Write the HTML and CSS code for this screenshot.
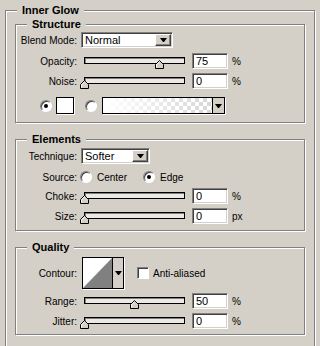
FILE: index.html
```html
<!DOCTYPE html>
<html>

<head>
    <title>Inner Glow</title>
    <link rel="stylesheet" href="styles.css">
</head>

<body>
    <div class="group outer">
        <div class="group-title outer-title">Inner Glow</div>

        <!-- Structure -->
        <div class="group inner structure">
            <div class="group-title">Structure</div>
            <div class="row row-blend">
                <span class="label">Blend Mode:</span>
                <div class="select select-blend">
                    <span class="select-text">Normal</span>
                    <span class="select-btn"><span class="arrow"></span></span>
                </div>
            </div>
            <div class="row row-opacity">
                <span class="label">Opacity:</span>
                <div class="slider">
                    <div class="track"></div>
                    <svg class="thumb" style="left: 75px" viewBox="0 0 9 9" width="9" height="9">
                        <path d="M0.5 8.5V4.5L4.5 0.5L8.5 4.5V8.5Z" fill="#d4d0c8" stroke="#000" />
                        <path d="M1.5 7.5V4.9L4.5 1.9" fill="none" stroke="#fff" />
                    </svg>
                </div>
                <div class="field">75</div>
                <span class="unit">%</span>
            </div>
            <div class="row row-noise">
                <span class="label">Noise:</span>
                <div class="slider">
                    <div class="track"></div>
                    <svg class="thumb" style="left: 0px" viewBox="0 0 9 9" width="9" height="9">
                        <path d="M0.5 8.5V4.5L4.5 0.5L8.5 4.5V8.5Z" fill="#d4d0c8" stroke="#000" />
                        <path d="M1.5 7.5V4.9L4.5 1.9" fill="none" stroke="#fff" />
                    </svg>
                </div>
                <div class="field">0</div>
                <span class="unit">%</span>
            </div>
            <div class="row row-color">
                <span class="radio checked radio-color"></span>
                <span class="swatch"></span>
                <span class="radio radio-gradient"></span>
                <div class="gradient">
                    <span class="gradient-fill"></span>
                    <span class="gradient-btn"><span class="arrow"></span></span>
                </div>
            </div>
        </div>

        <!-- Elements -->
        <div class="group inner elements">
            <div class="group-title">Elements</div>
            <div class="row row-technique">
                <span class="label">Technique:</span>
                <div class="select select-technique">
                    <span class="select-text">Softer</span>
                    <span class="select-btn"><span class="arrow"></span></span>
                </div>
            </div>
            <div class="row row-source">
                <span class="label">Source:</span>
                <span class="radio radio-source"></span>
                <span class="radio-text">Center</span>
                <span class="radio checked radio-source radio-edge"></span>
                <span class="radio-text">Edge</span>
            </div>
            <div class="row row-choke">
                <span class="label">Choke:</span>
                <div class="slider">
                    <div class="track"></div>
                    <svg class="thumb" style="left: 0px" viewBox="0 0 9 9" width="9" height="9">
                        <path d="M0.5 8.5V4.5L4.5 0.5L8.5 4.5V8.5Z" fill="#d4d0c8" stroke="#000" />
                        <path d="M1.5 7.5V4.9L4.5 1.9" fill="none" stroke="#fff" />
                    </svg>
                </div>
                <div class="field">0</div>
                <span class="unit">%</span>
            </div>
            <div class="row row-size">
                <span class="label">Size:</span>
                <div class="slider">
                    <div class="track"></div>
                    <svg class="thumb" style="left: 0px" viewBox="0 0 9 9" width="9" height="9">
                        <path d="M0.5 8.5V4.5L4.5 0.5L8.5 4.5V8.5Z" fill="#d4d0c8" stroke="#000" />
                        <path d="M1.5 7.5V4.9L4.5 1.9" fill="none" stroke="#fff" />
                    </svg>
                </div>
                <div class="field">0</div>
                <span class="unit">px</span>
            </div>
        </div>

        <!-- Quality -->
        <div class="group inner quality">
            <div class="group-title">Quality</div>
            <div class="row row-contour">
                <span class="label">Contour:</span>
                <div class="contour">
                    <svg class="contour-preview" viewBox="0 0 29 30" width="29" height="30">
                        <polygon points="0,30 29,0 29,30" fill="#808080" />
                    </svg>
                    <span class="contour-btn"><span class="arrow"></span></span>
                </div>
                <span class="checkbox"></span>
                <span class="check-text">Anti-aliased</span>
            </div>
            <div class="row row-range">
                <span class="label">Range:</span>
                <div class="slider">
                    <div class="track"></div>
                    <svg class="thumb" style="left: 50px" viewBox="0 0 9 9" width="9" height="9">
                        <path d="M0.5 8.5V4.5L4.5 0.5L8.5 4.5V8.5Z" fill="#d4d0c8" stroke="#000" />
                        <path d="M1.5 7.5V4.9L4.5 1.9" fill="none" stroke="#fff" />
                    </svg>
                </div>
                <div class="field">50</div>
                <span class="unit">%</span>
            </div>
            <div class="row row-jitter">
                <span class="label">Jitter:</span>
                <div class="slider">
                    <div class="track"></div>
                    <svg class="thumb" style="left: 0px" viewBox="0 0 9 9" width="9" height="9">
                        <path d="M0.5 8.5V4.5L4.5 0.5L8.5 4.5V8.5Z" fill="#d4d0c8" stroke="#000" />
                        <path d="M1.5 7.5V4.9L4.5 1.9" fill="none" stroke="#fff" />
                    </svg>
                </div>
                <div class="field">0</div>
                <span class="unit">%</span>
            </div>
        </div>
    </div>
</body>

</html>
```

FILE: styles.css
```css
html {
    overflow: hidden;
}

body {
    margin: 0;
    padding: 10px 0 0 5px;
    background-color: #d4d0c8;
    font-family: "Liberation Sans", Arial, sans-serif;
    font-size: 10px;
    color: #000;
}

/* etched group boxes */
.group {
    display: flex;
    flex-direction: column;
    box-sizing: border-box;
    border: 1px solid #808080;
    box-shadow: inset 1px 1px #fff, 1px 1px #fff;
}

.outer {
    width: 310px;
    padding: 0 9px 30px 9px;
}

.group-title {
    align-self: flex-start;
    height: 14px;
    line-height: 14px;
    margin: -8px 0 0 11px;
    padding: 0 5px;
    background-color: #d4d0c8;
    font-weight: bold;
    font-size: 11px;
}

.outer-title {
    margin-left: 2px;
}

.inner {
    margin-top: 16px;
}

.structure {
    margin-top: 7px;
    padding-bottom: 8px;
}

.elements {
    padding-bottom: 6px;
}

.quality {
    padding-bottom: 5px;
}

/* rows */
.row {
    display: flex;
    align-items: center;
    height: 16px;
}

.label {
    flex: none;
    width: 61px;
    text-align: right;
}

.row-blend {
    margin-top: 1px;
}

.row-opacity {
    margin-top: 5px;
}

.row-noise,
.row-choke,
.row-size,
.row-range,
.row-jitter {
    margin-top: 4px;
}

.row-color {
    height: 17px;
    margin-top: 8px;
}

.row-technique {
    margin-top: 2px;
}

.row-source {
    height: 14px;
    margin-top: 6px;
}

.row-contour {
    height: 32px;
    margin-top: 3px;
}

/* sunken inputs */
.field,
.select {
    box-sizing: border-box;
    height: 16px;
    background-color: #fff;
    border: 1px solid;
    border-color: #808080 #fff #fff #808080;
    box-shadow: inset 1px 1px #404040, inset -1px -1px #d4d0c8;
}

.field {
    flex: none;
    width: 36px;
    margin-left: 3px;
    padding: 0 3px;
    line-height: 14px;
    font-size: 11px;
}

.unit {
    margin-left: 4px;
}

.select {
    display: flex;
    padding: 1px;
    margin-left: 4px;
}

.select-blend {
    width: 92px;
}

.select-technique {
    width: 69px;
}

.select-text {
    flex: 1;
    padding-left: 2px;
    line-height: 12px;
    font-size: 11px;
}

.select-btn {
    display: flex;
    align-items: center;
    justify-content: center;
    box-sizing: border-box;
    width: 16px;
    height: 12px;
    background-color: #d4d0c8;
    border: 1px solid;
    border-color: #fff #404040 #404040 #fff;
    box-shadow: inset -1px -1px #808080;
}

.arrow {
    width: 1px;
    height: 0;
    border-left: 3px solid transparent;
    border-right: 3px solid transparent;
    border-top: 4px solid #000;
}

/* sliders */
.slider {
    position: relative;
    flex: none;
    width: 109px;
    height: 16px;
    margin-left: 3px;
}

.track {
    box-sizing: border-box;
    height: 7px;
    margin: 4px 4px 0 4px;
    border: 1px solid #000;
    background-color: #ece9e4;
    box-shadow: inset 1px 1px #808080;
}

.thumb {
    position: absolute;
    top: 7px;
    display: block;
}

/* radios and checkbox */
.radio,
.checkbox {
    position: relative;
    flex: none;
    box-sizing: border-box;
    width: 12px;
    height: 12px;
    background-color: #fff;
    border: 1px solid;
    border-color: #808080 #fff #fff #808080;
    box-shadow: inset 1px 1px #404040;
}

.radio {
    border-radius: 50%;
}

.radio.checked::after {
    content: '';
    position: absolute;
    left: 3px;
    top: 3px;
    width: 4px;
    height: 4px;
    border-radius: 50%;
    background-color: #000;
}

.radio-color {
    margin-left: 24px;
}

.radio-gradient {
    margin-left: 11px;
}

.radio-source {
    margin-left: 3px;
}

.radio-edge {
    margin-left: 16px;
}

.radio-text {
    margin-left: 5px;
}

.checkbox {
    margin-left: 13px;
}

.check-text {
    margin-left: 4px;
}

/* colour and gradient */
.swatch {
    flex: none;
    box-sizing: border-box;
    width: 18px;
    height: 17px;
    margin-left: 4px;
    background-color: #fff;
    border: 1px solid #000;
    box-shadow: 1px 1px #fff;
}

.gradient {
    display: flex;
    flex: none;
    box-sizing: border-box;
    width: 123px;
    height: 17px;
    margin-left: 5px;
    border: 1px solid #000;
    box-shadow: 1px 1px #fff;
}

.gradient-fill {
    flex: 1;
    background: linear-gradient(to right, #fff, rgba(255, 255, 255, 0)),
        repeating-conic-gradient(#d6d6d6 0 25%, #fff 0 50%) 0 0 / 8px 8px;
}

.gradient-btn,
.contour-btn {
    display: flex;
    align-items: center;
    justify-content: center;
    background-color: #d4d0c8;
    border-left: 1px solid #000;
}

.gradient-btn {
    width: 11px;
}

/* contour */
.contour {
    display: flex;
    flex: none;
    box-sizing: border-box;
    width: 42px;
    height: 32px;
    margin-left: 5px;
    background-color: #fff;
    border: 1px solid #000;
    box-shadow: 1px 1px #fff;
}

.contour-preview {
    display: block;
}

.contour-btn {
    flex: 1;
}
```
